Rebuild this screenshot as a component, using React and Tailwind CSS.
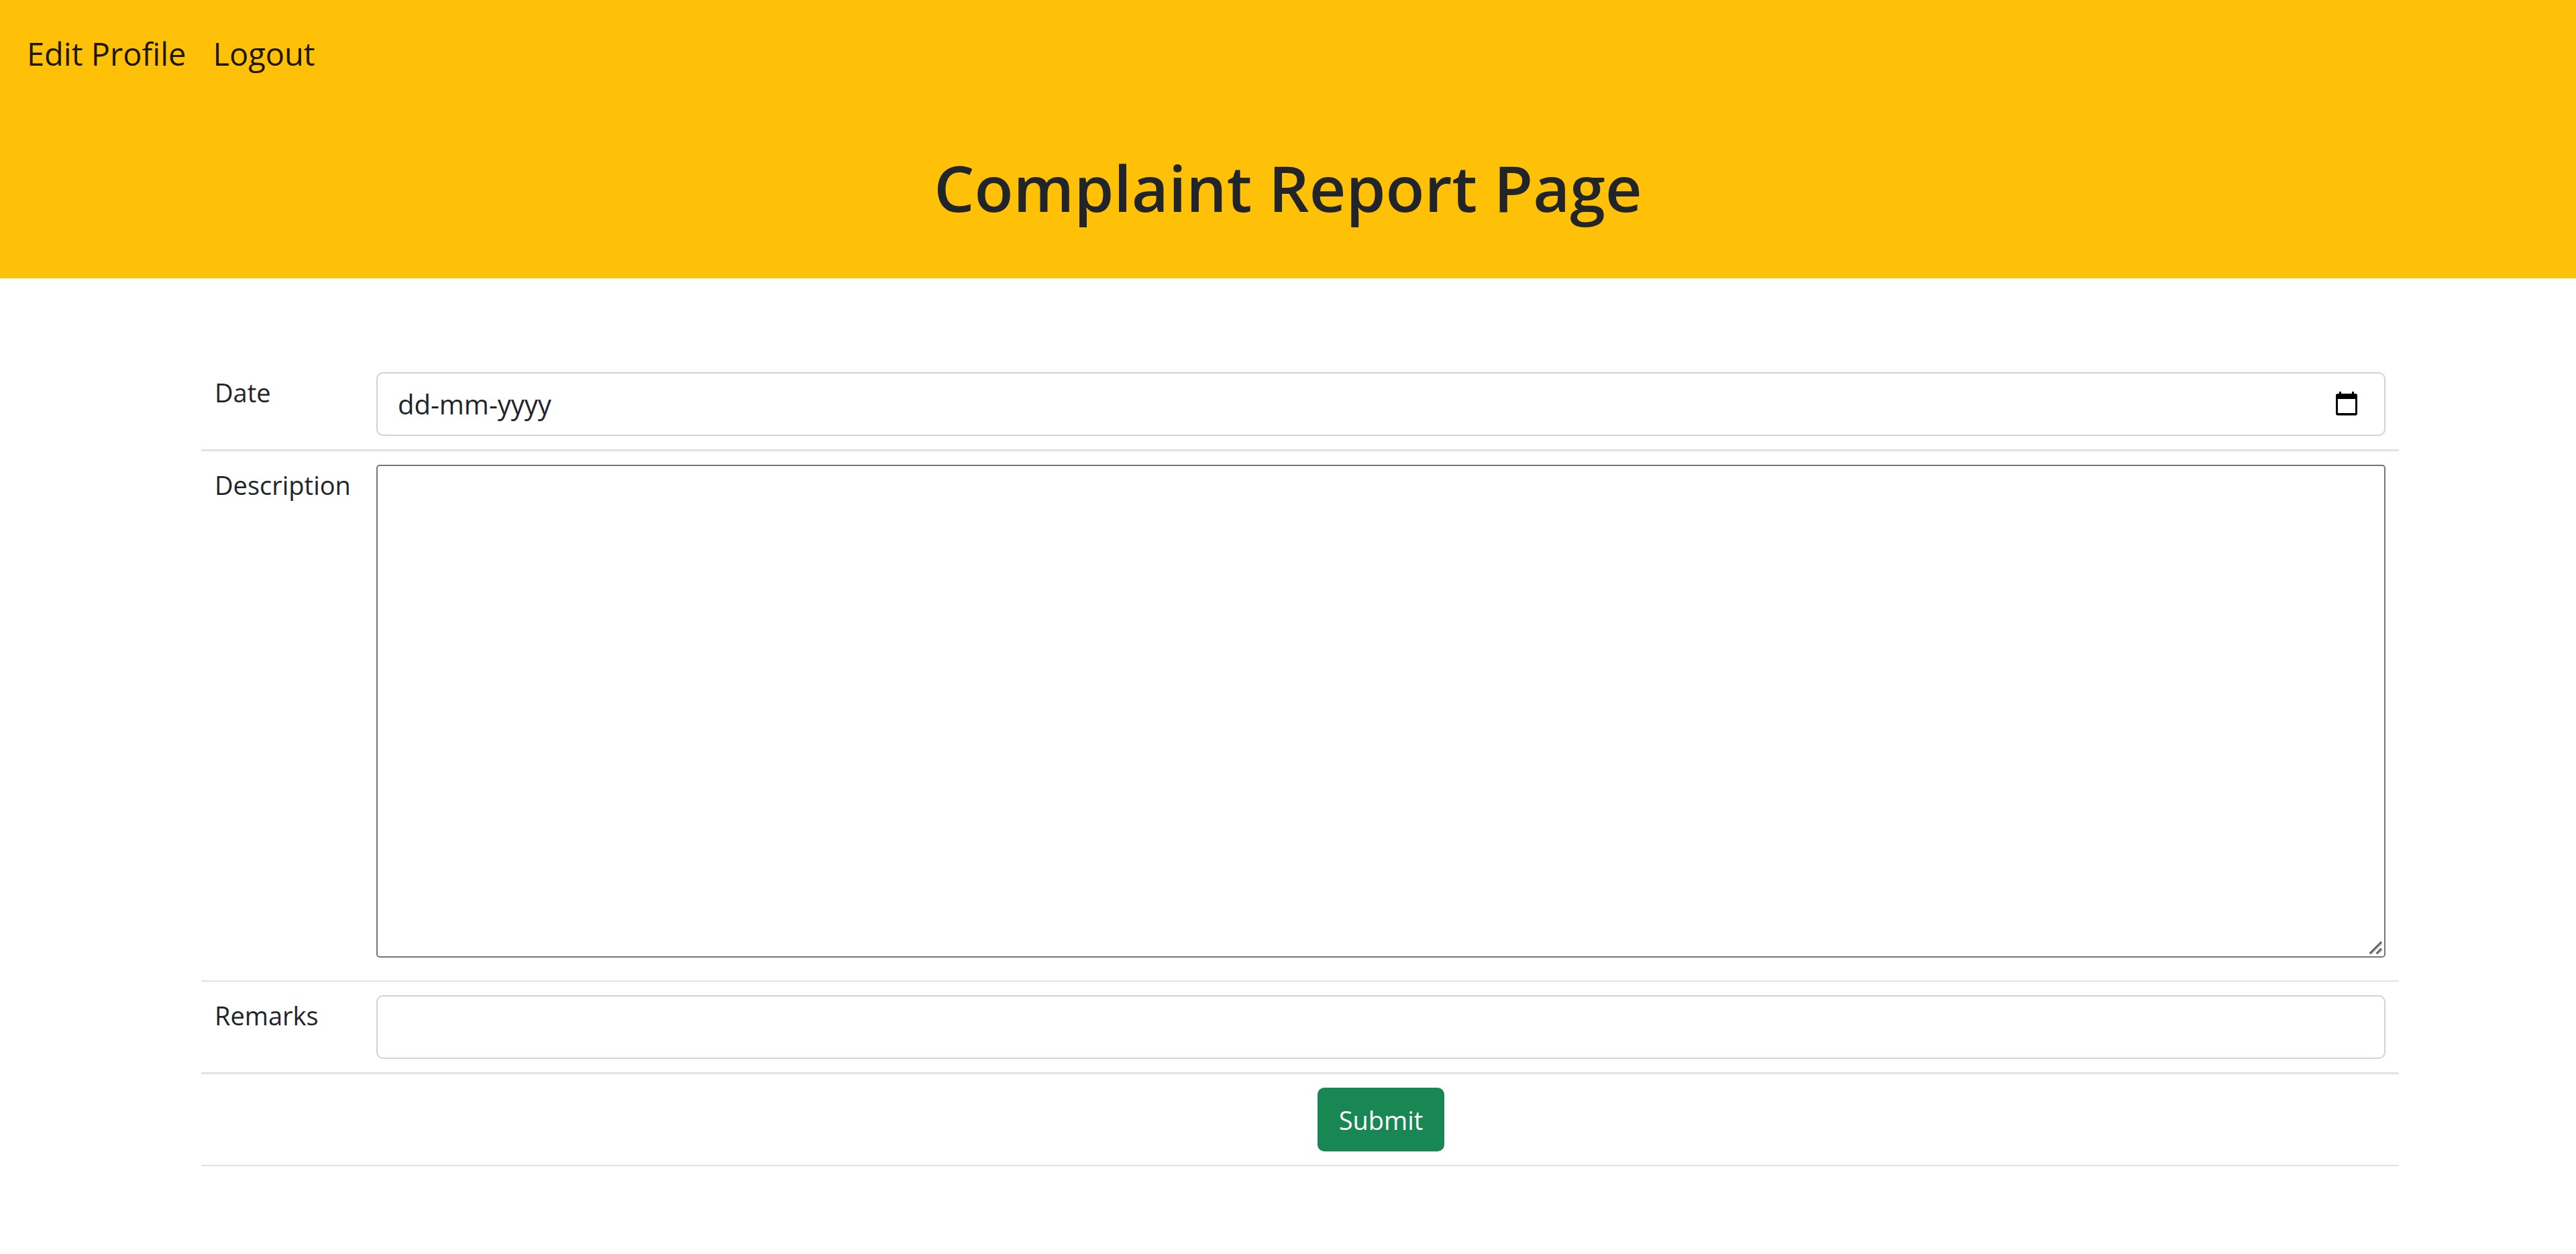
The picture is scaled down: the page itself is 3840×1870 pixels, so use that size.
const CONTROL =
  'block h-[95px] w-full rounded-[10px] border-2 border-[#ced4da] bg-white px-[30px] text-[40px] leading-[60px] text-[#212529]';

function CalendarIcon() {
  return (
    <svg viewBox="0 0 32 36" className="h-9 w-8" aria-hidden="true">
      <path
        fillRule="evenodd"
        d="M5 0h3v3h16V0h3v3h2a3 3 0 0 1 3 3v26.500a3 3 0 0 1-3 3H3a3 3 0 0 1-3-3V6a3 3 0 0 1 3-3h2zM3 11v21h26V11z"
        fill="#000"
      />
    </svg>
  );
}

function Row({ label, htmlFor, border, children }) {
  return (
    <div className={'flex items-start border-[#dee2e6] py-5 ' + border}>
      <div className="w-[241px] shrink-0 pl-5 text-[38px] leading-[60px]">
        {label && <label htmlFor={htmlFor}>{label}</label>}
      </div>
      <div className="min-w-0 flex-1 px-5">{children}</div>
    </div>
  );
}

export default function App() {
  return (
    <div className="min-h-screen bg-white font-['Open_Sans','Noto_Sans',sans-serif] text-[#212529]">
      <header className="bg-[#ffc107] pb-[76px]">
        <nav className="flex gap-10 px-10 pt-[43px] text-[47px] leading-[75px] text-black/90">
          <a href="#profile">Edit Profile</a>
          <a href="#logout">Logout</a>
        </nav>
        <h1 className="pt-[101px] text-center text-[95px] leading-[120px] font-semibold">
          Complaint Report Page
        </h1>
      </header>

      <main className="pt-[120px] pr-[264px] pb-[120px] pl-[300px]">
        <form onSubmit={(e) => e.preventDefault()}>
          <Row label="Date" htmlFor="date" border="border-b-3">
            <div className="relative">
              <input id="date" type="text" placeholder="dd-mm-yyyy" className={CONTROL + ' placeholder:text-[#212529] placeholder:opacity-100'} />
              <button type="button" aria-label="Open calendar" className="absolute top-[29px] right-[42px]">
                <CalendarIcon />
              </button>
            </div>
          </Row>
          <Row label="Description" htmlFor="description" border="border-b-2">
            <div className="relative pb-3.5">
              <textarea
                id="description"
                className="block h-[735px] w-full resize-none rounded-[5px] border-2 border-[#767676] bg-white p-[5px] text-[40px] leading-[60px]"
              />
              <svg viewBox="0 0 20 20" className="absolute right-[5px] bottom-[19px] size-5" aria-hidden="true">
                <path d="M3.500 20L20 3.500M13.500 20L20 13.500" stroke="#c9c9c9" strokeWidth="2" />
                <path d="M1.500 19L19 1.500M11.500 19L19 11.500" stroke="#5f5f5f" strokeWidth="2.600" />
              </svg>
            </div>
          </Row>
          <Row label="Remarks" htmlFor="remarks" border="border-b-3">
            <input id="remarks" type="text" className={CONTROL} />
          </Row>
          <Row border="border-b-2">
            <div className="flex justify-center">
              <button type="submit" className="h-[95px] rounded-[10px] bg-[#198754] px-8 text-[38px] leading-[60px] text-white">
                Submit
              </button>
            </div>
          </Row>
        </form>
      </main>
    </div>
  );
}
